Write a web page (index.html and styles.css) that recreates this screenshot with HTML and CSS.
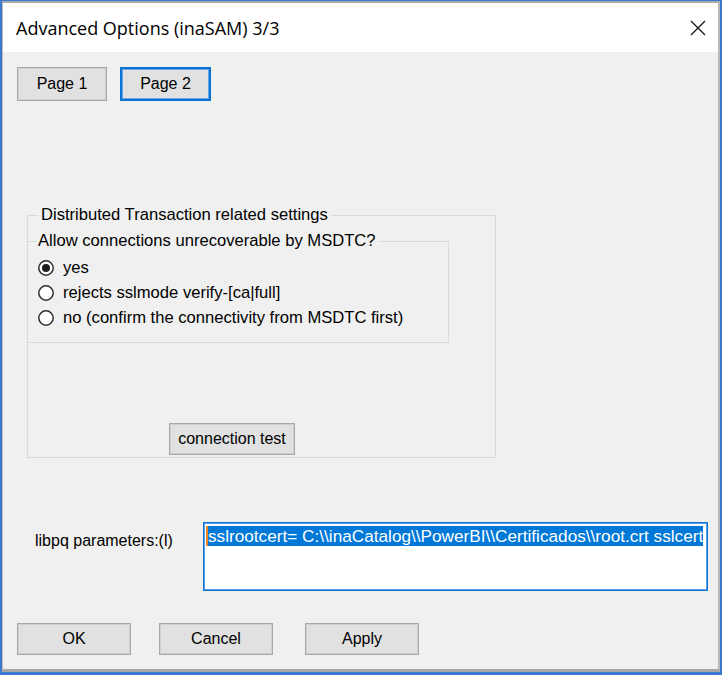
FILE: index.html
```html
<!DOCTYPE html>
<html lang="en">
<head>
<meta charset="utf-8">
<title>Advanced Options (inaSAM) 3/3</title>
<link rel="stylesheet" href="styles.css">
</head>
<body>
<div class="window">
  <div class="frame">
    <div class="titlebar">
      <span class="title">Advanced Options (inaSAM) 3/3</span>
      <svg class="close" width="16" height="16" viewBox="0 0 16 16" aria-hidden="true">
        <path d="M1 1 L15 15 M15 1 L1 15" stroke="#1a1a1a" stroke-width="1.4" fill="none"/>
      </svg>
    </div>
    <div class="content">
      <div class="pages">
        <button class="btn btn-page">Page 1</button>
        <button class="btn btn-page btn-focus">Page 2</button>
      </div>

      <fieldset class="group group-outer">
        <legend class="legend">Distributed Transaction related settings</legend>
        <fieldset class="group group-inner">
          <legend class="legend legend-inner">Allow connections unrecoverable by MSDTC?</legend>
          <div class="radios">
            <div class="radio-row">
              <svg class="radio" width="16" height="16" viewBox="0 0 16 16"><circle cx="8" cy="8" r="7.2" fill="#fff" stroke="#2e2e2e" stroke-width="1.5"/><circle cx="8" cy="8" r="4" fill="#1f1f1f"/></svg>
              <span>yes</span>
            </div>
            <div class="radio-row">
              <svg class="radio" width="16" height="16" viewBox="0 0 16 16"><circle cx="8" cy="8" r="7.2" fill="#fff" stroke="#2e2e2e" stroke-width="1.5"/></svg>
              <span>rejects sslmode verify-[ca|full]</span>
            </div>
            <div class="radio-row">
              <svg class="radio" width="16" height="16" viewBox="0 0 16 16"><circle cx="8" cy="8" r="7.2" fill="#fff" stroke="#2e2e2e" stroke-width="1.5"/></svg>
              <span>no (confirm the connectivity from MSDTC first)</span>
            </div>
          </div>
        </fieldset>
        <button class="btn btn-test">connection test</button>
      </fieldset>

      <div class="params">
        <span class="params-label">libpq parameters:(l)</span>
        <div class="textbox"><span class="selected">sslrootcert= C:\\inaCatalog\\PowerBI\\Certificados\\root.crt sslcert</span></div>
      </div>

      <div class="actions">
        <button class="btn btn-action">OK</button>
        <button class="btn btn-action">Cancel</button>
        <button class="btn btn-action btn-apply">Apply</button>
      </div>
    </div>
  </div>
</div>
</body>
</html>
```
FILE: styles.css
```css
html, body {
  margin: 0;
  padding: 0;
  background: #f0f0f0;
}

body {
  font-family: "Liberation Sans", Arial, sans-serif;
  font-size: 16px;
  color: #000;
}

.window {
  width: 722px;
  height: 675px;
  box-sizing: border-box;
  border-style: solid;
  border-color: #3b78cf;
  border-width: 1px 2px 3px 2px;
}

.frame {
  height: 100%;
  box-sizing: border-box;
  border-style: solid;
  border-color: #a9a9a9 #b9b9b9 #a6a6a6 #bdbdbd;
  border-width: 2px 2px 3px 1px;
  display: flex;
  flex-direction: column;
  background: #f0f0f0;
}

.titlebar {
  height: 49px;
  flex: none;
  background: #fff;
  display: flex;
  align-items: center;
  justify-content: space-between;
  padding: 0 12px 0 13px;
}

.title {
  font-family: "Open Sans", "Noto Sans", sans-serif;
  font-size: 18px;
  color: #000;
}

.close {
  display: block;
  margin-top: 1px;
}

.content {
  flex: 1;
  padding: 15px 0 0 14px;
}

.pages {
  display: flex;
  gap: 13px;
}

.btn {
  font-family: "Liberation Sans", Arial, sans-serif;
  font-size: 16px;
  color: #000;
  background: #e1e1e1;
  border: 1px solid #a8a8a8;
  box-shadow: inset 0 0 0 1px #cfcfcf;
  padding: 0;
  margin: 0;
  box-sizing: border-box;
}

.btn-page {
  width: 90px;
  height: 34px;
}

.btn-focus {
  width: 91px;
  border: 2px solid #0a72d4;
  box-shadow: inset 0 0 0 1px #6aa8e4;
}

.group {
  margin: 0;
  padding: 0;
  border: 1px solid #d9d9d9;
  min-width: 0;
  box-sizing: border-box;
  font-size: 16.6px;
}

.legend {
  padding: 0 3px;
  margin-left: 10px;
  line-height: 18px;
}

.group-outer {
  width: 469px;
  margin: 105px 0 0 10px;
  padding-bottom: 2px;
}

.group-inner {
  width: 422px;
  margin: 8px 0 0 -1px;
}

.legend-inner {
  margin-left: 8px;
  padding-left: 2px;
}

.radios {
  padding: 5px 0 12px 10px;
}

.radio-row {
  height: 25px;
  display: flex;
  align-items: center;
  gap: 9px;
}

.radio {
  display: block;
  flex: none;
}

.btn-test {
  display: block;
  width: 126px;
  height: 32px;
  margin: 80px 0 0 141px;
}

.params {
  display: flex;
  align-items: flex-start;
  margin-top: 64px;
}

.params-label {
  width: 168px;
  flex: none;
  margin: 10px 0 0 18px;
  line-height: 18px;
}

.textbox {
  width: 505px;
  height: 69px;
  box-sizing: border-box;
  background: #fff;
  border: 1px solid #0a72d4;
  box-shadow: inset 0 0 0 1px #5a9fe4;
  padding: 3px 2px 0 2px;
  overflow: hidden;
  white-space: nowrap;
}

.selected {
  display: inline-block;
  line-height: 20px;
  font-size: 17.2px;
  background: #0078d7;
  color: #fff;
  border-left: 2px solid #e8832a;
}

.actions {
  display: flex;
  gap: 28px;
  margin-top: 32px;
}

.btn-action {
  width: 114px;
  height: 32px;
}

.btn-apply {
  margin-left: 4px;
}
```
